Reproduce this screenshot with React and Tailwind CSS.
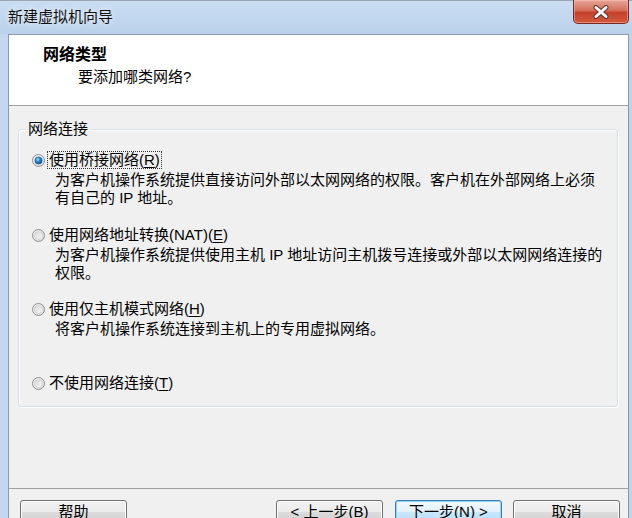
import React, { useId } from "react";

const FONT = "font-['Liberation_Sans','Noto_Sans_CJK_SC',sans-serif]";

function Radio({ checked }) {
  const id = useId().replace(/:/g, "");
  return (
    <svg width="13" height="13" viewBox="0 0 13 13" className="shrink-0">
      <defs>
        <linearGradient id={`o${id}`} x1="0" y1="0" x2="1" y2="1">
          <stop offset="0" stopColor="#f4f4f4" />
          <stop offset="1" stopColor="#d9d9d9" />
        </linearGradient>
        <linearGradient id={`i${id}`} x1="0" y1="0" x2="1" y2="1">
          <stop offset="0" stopColor="#d6d6d6" />
          <stop offset="1" stopColor="#f9f9f9" />
        </linearGradient>
        <radialGradient id={`d${id}`} cx="0.4" cy="0.35" r="0.65">
          <stop offset="0" stopColor="#9fe0ff" />
          <stop offset="0.45" stopColor="#2f8fd6" />
          <stop offset="1" stopColor="#0d4a87" />
        </radialGradient>
      </defs>
      <circle cx="6.5" cy="6.5" r="6" fill={`url(#o${id})`} stroke="#8e8f8f" strokeWidth="1" />
      {checked ? (
        <circle cx="6.5" cy="6.5" r="3.6" fill={`url(#d${id})`} stroke="#1b4f80" strokeWidth="0.6" />
      ) : (
        <circle cx="6.5" cy="6.5" r="4" fill={`url(#i${id})`} stroke="#c6c6c6" strokeWidth="0.5" />
      )}
    </svg>
  );
}

function RadioRow({ checked, focused, children, className = "" }) {
  return (
    <div className={`flex items-center h-[20px] pl-[13px] ${className}`}>
      <Radio checked={checked} />
      <span
        className={`ml-[2px] px-[1px] leading-[16px] border whitespace-nowrap ${
          focused ? "border-dotted border-[#333]" : "border-transparent"
        }`}
      >
        {children}
      </span>
    </div>
  );
}

function Desc({ children, className = "" }) {
  return (
    <div className={`pl-[36px] leading-[18px] whitespace-nowrap ${className}`}>{children}</div>
  );
}

function Btn({ children, primary, className = "" }) {
  return (
    <div
      className={`w-[107px] h-[23px] rounded-[3px] border flex items-center justify-center leading-[18px] text-[15px] text-[#000] ${
        primary
          ? "border-[#3c7fb1] bg-[linear-gradient(to_bottom,#f2f9fe,#e2f2fc_50%,#c9e7fa_51%,#b8dff8)] shadow-[inset_0_0_0_1px_#8fd1f7]"
          : "border-[#707070] bg-[linear-gradient(to_bottom,#f2f2f2,#ebebeb_50%,#dddddd_51%,#cfcfcf)] shadow-[inset_0_0_0_1px_#fcfcfc]"
      } ${className}`}
    >
      {children}
    </div>
  );
}

const U = ({ children }) => <span className="underline underline-offset-2">{children}</span>;

export default function App() {
  return (
    <div
      className={`w-[632px] h-[518px] overflow-hidden flex flex-col bg-[linear-gradient(to_right,#c3d8ef,#bcd4ee)] text-[15px] text-[#000] ${FONT}`}
    >
      {/* Title bar */}
      <div className="relative h-[34px] shrink-0 flex items-center pl-[8px] border-t border-[#9aa7b6] bg-[linear-gradient(to_bottom,#c9dcf1,#c2d8f0_50%,#bad1ea)]">
        <span className="leading-[18px] mt-[-1px] text-[#111] [text-shadow:0_0_6px_#ffffff]">新建虚拟机向导</span>
        <div className="absolute top-[-1px] right-[3px] w-[56px] h-[24px] rounded-b-[5px] border border-t-0 border-[#7b2a20] bg-[linear-gradient(to_bottom,#e6a699,#d56f5a_45%,#c4402a_55%,#d35a3f)] shadow-[inset_0_0_0_1px_rgba(255,200,190,0.45)] flex items-center justify-center">
          <svg width="20" height="14" viewBox="0 0 20 14">
            <path d="M5 2.5 L15 11.5 M15 2.5 L5 11.5" stroke="#5b3b36" strokeWidth="5" strokeLinecap="round" />
            <path d="M5 2.5 L15 11.5 M15 2.5 L5 11.5" stroke="#f4f4f4" strokeWidth="3" strokeLinecap="round" />
          </svg>
        </div>
      </div>

      {/* Client area */}
      <div className="flex-1 flex flex-col ml-[8px] mr-[3px] border-t border-l border-r border-[#8a99ad] bg-[#f0f0f0] min-h-0">
        {/* Header */}
        <div className="h-[71px] shrink-0 bg-white border-b border-[#a0a0a0] pt-[11px]">
          <div className="pl-[34px] leading-[18px] text-[16px] font-bold">网络类型</div>
          <div className="pl-[69px] leading-[18px] mt-[4px]">要添加哪类网络?</div>
        </div>

        {/* Body */}
        <fieldset className="mt-[14px] ml-[9px] mr-[10px] border border-[#d5dfe5] rounded-[3px] pb-[13px] shadow-[inset_1px_1px_0_#ffffff,1px_1px_0_#ffffff]">
          <legend className="ml-[7px] px-[2px] leading-[18px]">网络连接</legend>
          <RadioRow checked focused className="mt-[12px]">
            使用桥接网络(<U>R</U>)
          </RadioRow>
          <Desc className="mt-[1px]">
            为客户机操作系统提供直接访问外部以太网网络的权限。客户机在外部网络上必须
            <br />
            有自己的 IP 地址。
          </Desc>

          <RadioRow className="mt-[18px]">
            使用网络地址转换(NAT)(<U>E</U>)
          </RadioRow>
          <Desc className="mt-[1px]">
            为客户机操作系统提供使用主机 IP 地址访问主机拨号连接或外部以太网网络连接的
            <br />
            权限。
          </Desc>

          <RadioRow className="mt-[17px]">
            使用仅主机模式网络(<U>H</U>)
          </RadioRow>
          <Desc className="mt-[1px]">将客户机操作系统连接到主机上的专用虚拟网络。</Desc>

          <RadioRow className="mt-[35px]">
            不使用网络连接(<U>T</U>)
          </RadioRow>
        </fieldset>

        <div className="flex-1" />

        {/* Footer */}
        <div className="h-[30px] shrink-0 border-t border-[#a0a0a0] pt-[11px] pl-[11px] pr-[8px] flex items-start">
          <Btn>帮助</Btn>
          <div className="flex-1" />
          <Btn>&lt; 上一步(<U>B</U>)</Btn>
          <Btn primary className="ml-[12px]">
            下一步(<U>N</U>) &gt;
          </Btn>
          <Btn className="ml-[11px]">取消</Btn>
        </div>
      </div>
    </div>
  );
}
